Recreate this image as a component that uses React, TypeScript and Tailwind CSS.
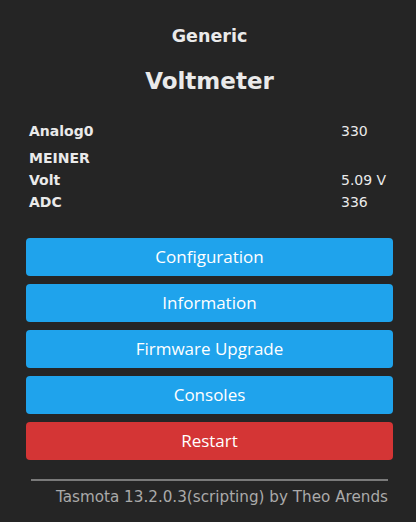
import React from "react";

const rows: [string, string, string][] = [
  ["Analog0", "330", "mt-0"],
  ["MEINER", "", "mt-[5px]"],
  ["Volt", "5.09 V", "mt-0"],
  ["ADC", "336", "mt-0"],
];

const buttons: [string, string][] = [
  ["Configuration", "bg-[#1fa3ec]"],
  ["Information", "bg-[#1fa3ec]"],
  ["Firmware Upgrade", "bg-[#1fa3ec]"],
  ["Consoles", "bg-[#1fa3ec]"],
  ["Restart", "bg-[#d43535]"],
];

export default function App() {
  return (
    <div className="w-[416px] h-[522px] bg-[#252525] text-[#eaeaea] font-['DejaVu_Sans',Verdana,sans-serif] flex flex-col pl-[26px]">
      <div className="w-[367px] flex flex-col">
        <div className="text-center font-bold text-[17.5px] mt-[26px] leading-[20px]">Generic</div>
        <div className="text-center font-bold text-[23px] mt-[21px] leading-[28px]">Voltmeter</div>
        <div className="mt-[25px] flex flex-col px-[3px]">
          {rows.map(([k, v, m]) => (
            <div key={k} className={`flex text-[14px] leading-[22px] ${m}`}>
              <div className="w-[312px] font-bold">{k}</div>
              <div>{v}</div>
            </div>
          ))}
        </div>
        <div className="mt-[25px] flex flex-col gap-[8px]">
          {buttons.map(([t, c]) => (
            <div
              key={t}
              className={`${c} h-[38px] rounded-[4px] flex items-center justify-center text-white text-[17px] font-['Open_Sans',sans-serif]`}
            >
              {t}
            </div>
          ))}
        </div>
        <div className="mt-[19px] mx-[5px] h-[2px] bg-[#7a7a7a]" />
        <div className="mx-[5px] mt-[6px] text-right text-[15.2px] leading-[20px] text-[#aaaaaa]">
          Tasmota 13.2.0.3(scripting) by Theo Arends
        </div>
      </div>
    </div>
  );
}
